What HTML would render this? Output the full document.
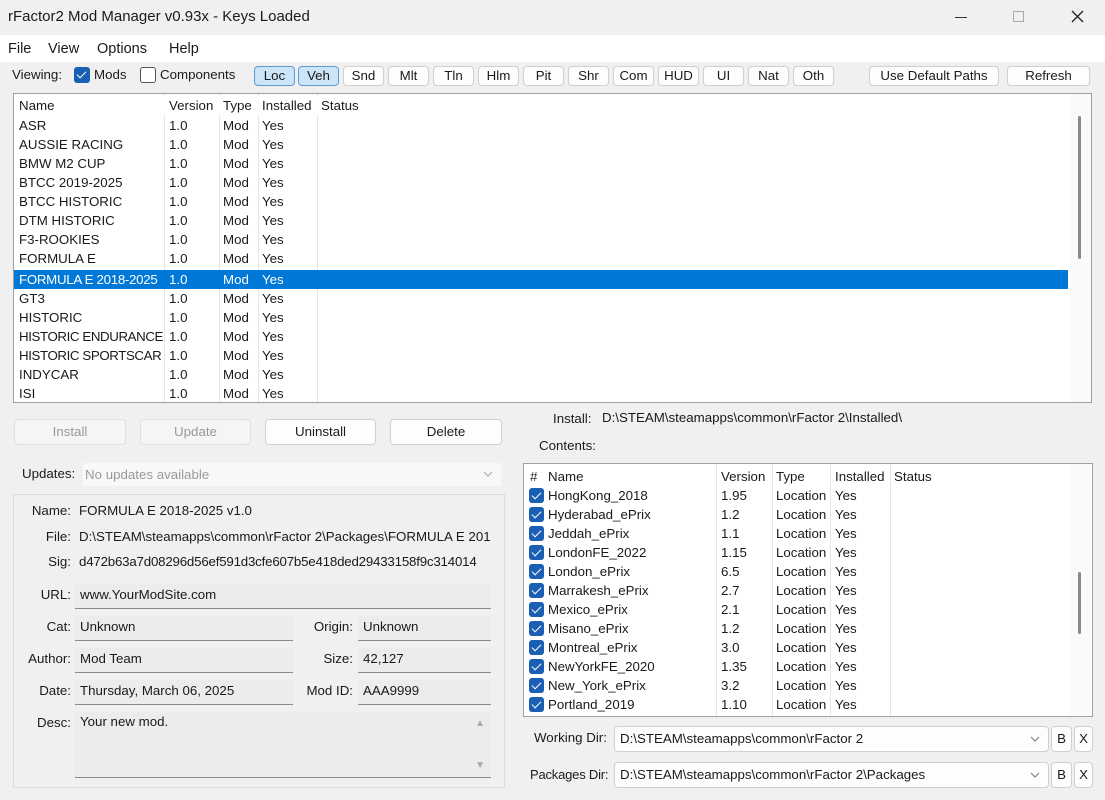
<!DOCTYPE html>
<html><head><meta charset="utf-8"><style>
*{box-sizing:border-box;margin:0;padding:0}
body{width:1105px;height:800px;background:#f0f0f0;font-family:"Liberation Sans",sans-serif;font-size:13.3px;color:#1a1a1a;position:relative;overflow:hidden}
.a{position:absolute;white-space:nowrap}
.btn{position:absolute;background:#fdfdfd;border:1px solid #d0d0d0;border-radius:4px;text-align:center;line-height:18px}
.tb{top:66px;width:41px;height:20px}
.on{background:#cce4f7;border-color:#5a9bd5}
.list{position:absolute;background:#fff;border:1px solid #a0a0a0;overflow:hidden}
.row{position:absolute;left:0;height:19px;line-height:19px;width:100%}
.row span{position:absolute}
.vl{position:absolute;width:1px;background:#e5e5e5}
.cb{position:absolute;width:15px;height:15px;background:#1a5fb4;border-radius:3px}
.cb::after{content:"";position:absolute;left:5px;top:2px;width:4px;height:8px;border:solid #fff;border-width:0 1.5px 1.5px 0;transform:rotate(45deg)}
.fld{position:absolute;background:#ececec;border-bottom:1px solid #8a8a8a;padding-left:5px;line-height:22px;height:25px}
.lbl{position:absolute;text-align:right;width:60px}
.gb{position:absolute;background:#fdfdfd;border:1px solid #d0d0d0;border-radius:4px;line-height:24px;padding-left:5px}
.chev{position:absolute;right:8px;top:9px}
</style></head><body>
<div class="a" style="left:0;top:0;width:1105px;height:35px;background:#eff1ee"></div>
<div class="a" style="left:8px;top:8px;font-size:15px">rFactor2 Mod Manager v0.93x - Keys Loaded</div>
<div class="a" style="left:955px;top:17px;width:12px;height:1px;background:#333"></div>
<div class="a" style="left:1013px;top:11px;width:11px;height:11px;border:1px solid #aaa"></div>
<svg class="a" style="left:1071px;top:10px" width="13" height="13"><path d="M1 1L12 12M12 1L1 12" stroke="#222" stroke-width="1.3"/></svg>
<div class="a" style="left:0;top:35px;width:1105px;height:27px;background:#fff"></div>
<div class="a" style="left:8px;top:41px;font-size:14.5px">File</div>
<div class="a" style="left:48px;top:41px;font-size:14.5px">View</div>
<div class="a" style="left:97px;top:41px;font-size:14.5px">Options</div>
<div class="a" style="left:169px;top:41px;font-size:14.5px">Help</div>

<div class="a" style="left:12px;top:67px">Viewing:</div>
<div class="cb" style="left:74px;top:67px;width:16px;height:16px"></div>
<div class="a" style="left:94px;top:67px">Mods</div>
<div class="a" style="left:140px;top:67px;width:16px;height:16px;border:1px solid #555;border-radius:3px;background:#fff"></div>
<div class="a" style="left:160px;top:67px">Components</div>
<div class="btn tb on" style="left:254px">Loc</div>
<div class="btn tb on" style="left:298px">Veh</div>
<div class="btn tb" style="left:343px">Snd</div>
<div class="btn tb" style="left:388px">Mlt</div>
<div class="btn tb" style="left:433px">Tln</div>
<div class="btn tb" style="left:478px">Hlm</div>
<div class="btn tb" style="left:523px">Pit</div>
<div class="btn tb" style="left:568px">Shr</div>
<div class="btn tb" style="left:613px">Com</div>
<div class="btn tb" style="left:658px">HUD</div>
<div class="btn tb" style="left:703px">UI</div>
<div class="btn tb" style="left:748px">Nat</div>
<div class="btn tb" style="left:793px">Oth</div>
<div class="btn" style="left:869px;top:66px;width:130px;height:20px">Use Default Paths</div>
<div class="btn" style="left:1007px;top:66px;width:83px;height:20px">Refresh</div>

<div class="list" style="left:13px;top:93px;width:1079px;height:310px">
<div class="vl" style="left:150px;top:0;height:310px"></div><div class="vl" style="left:205px;top:0;height:310px"></div><div class="vl" style="left:244px;top:0;height:310px"></div><div class="vl" style="left:303px;top:0;height:310px"></div>
<div class="row" style="top:2px;background:#fff"><span style="left:5px">Name</span><span style="left:155px">Version</span><span style="left:209px">Type</span><span style="left:248px">Installed</span><span style="left:307px">Status</span></div>
<div class="row" style="top:22px"><span style="left:5px">ASR</span><span style="left:155px">1.0</span><span style="left:209px">Mod</span><span style="left:248px">Yes</span></div>
<div class="row" style="top:41px"><span style="left:5px">AUSSIE RACING</span><span style="left:155px">1.0</span><span style="left:209px">Mod</span><span style="left:248px">Yes</span></div>
<div class="row" style="top:60px"><span style="left:5px">BMW M2 CUP</span><span style="left:155px">1.0</span><span style="left:209px">Mod</span><span style="left:248px">Yes</span></div>
<div class="row" style="top:79px"><span style="left:5px">BTCC 2019-2025</span><span style="left:155px">1.0</span><span style="left:209px">Mod</span><span style="left:248px">Yes</span></div>
<div class="row" style="top:98px"><span style="left:5px">BTCC HISTORIC</span><span style="left:155px">1.0</span><span style="left:209px">Mod</span><span style="left:248px">Yes</span></div>
<div class="row" style="top:117px"><span style="left:5px">DTM HISTORIC</span><span style="left:155px">1.0</span><span style="left:209px">Mod</span><span style="left:248px">Yes</span></div>
<div class="row" style="top:136px"><span style="left:5px">F3-ROOKIES</span><span style="left:155px">1.0</span><span style="left:209px">Mod</span><span style="left:248px">Yes</span></div>
<div class="row" style="top:155px"><span style="left:5px">FORMULA E</span><span style="left:155px">1.0</span><span style="left:209px">Mod</span><span style="left:248px">Yes</span></div>
<div class="row" style="top:176px;width:1054px;background:#0078d7;color:#fff"><span style="left:5px;letter-spacing:-0.3px">FORMULA E 2018-2025</span><span style="left:155px">1.0</span><span style="left:209px">Mod</span><span style="left:248px">Yes</span></div>
<div class="row" style="top:195px"><span style="left:5px">GT3</span><span style="left:155px">1.0</span><span style="left:209px">Mod</span><span style="left:248px">Yes</span></div>
<div class="row" style="top:214px"><span style="left:5px">HISTORIC</span><span style="left:155px">1.0</span><span style="left:209px">Mod</span><span style="left:248px">Yes</span></div>
<div class="row" style="top:233px"><span style="left:5px;letter-spacing:-0.4px">HISTORIC ENDURANCE</span><span style="left:155px">1.0</span><span style="left:209px">Mod</span><span style="left:248px">Yes</span></div>
<div class="row" style="top:252px"><span style="left:5px;letter-spacing:-0.4px">HISTORIC SPORTSCAR</span><span style="left:155px">1.0</span><span style="left:209px">Mod</span><span style="left:248px">Yes</span></div>
<div class="row" style="top:271px"><span style="left:5px">INDYCAR</span><span style="left:155px">1.0</span><span style="left:209px">Mod</span><span style="left:248px">Yes</span></div>
<div class="row" style="top:290px"><span style="left:5px">ISI</span><span style="left:155px">1.0</span><span style="left:209px">Mod</span><span style="left:248px">Yes</span></div>
<div class="a" style="left:1056px;top:0;width:22px;height:310px;background:#fafafa"></div>
<div class="a" style="left:1064px;top:22px;width:3px;height:143px;background:#8a8a8a;border-radius:2px"></div>
</div>

<div class="btn" style="left:14px;top:419px;width:112px;height:26px;line-height:24px;color:#999;background:#f5f5f5;border-color:#e0e0e0">Install</div>
<div class="btn" style="left:140px;top:419px;width:111px;height:26px;line-height:24px;color:#999;background:#f5f5f5;border-color:#e0e0e0">Update</div>
<div class="btn" style="left:265px;top:419px;width:111px;height:26px;line-height:24px">Uninstall</div>
<div class="btn" style="left:390px;top:419px;width:112px;height:26px;line-height:24px">Delete</div>

<div class="a" style="left:22px;top:466px">Updates:</div>
<div class="a" style="left:83px;top:463px;width:418px;height:23px;background:#f8f8f8;color:#999;line-height:23px;padding-left:2px">No updates available<svg class="chev" style="top:8px" width="10" height="6"><path d="M1 1L5 5L9 1" stroke="#aaa" fill="none"/></svg></div>

<div class="a" style="left:13px;top:494px;width:492px;height:294px;border:1px solid #dcdcdc"></div>
<div class="lbl" style="left:11px;top:503px">Name:</div><div class="a" style="left:79px;top:503px">FORMULA E 2018-2025 v1.0</div>
<div class="lbl" style="left:11px;top:529px">File:</div><div class="a" style="left:79px;top:529px;width:412px;overflow:hidden">D:\STEAM\steamapps\common\rFactor 2\Packages\FORMULA E 2018-2025.rfcmp</div>
<div class="lbl" style="left:11px;top:554px">Sig:</div><div class="a" style="left:79px;top:554px;width:412px;overflow:hidden;letter-spacing:-0.2px">d472b63a7d08296d56ef591d3cfe607b5e418ded29433158f9c314014</div>
<div class="lbl" style="left:11px;top:587px">URL:</div><div class="fld" style="left:75px;top:584px;width:416px">www.YourModSite.com</div>
<div class="lbl" style="left:11px;top:619px">Cat:</div><div class="fld" style="left:75px;top:616px;width:218px">Unknown</div>
<div class="lbl" style="left:11px;top:651px">Author:</div><div class="fld" style="left:75px;top:648px;width:218px">Mod Team</div>
<div class="lbl" style="left:11px;top:683px">Date:</div><div class="fld" style="left:75px;top:680px;width:218px">Thursday, March 06, 2025</div>
<div class="lbl" style="left:293px;top:619px">Origin:</div><div class="fld" style="left:358px;top:616px;width:133px">Unknown</div>
<div class="lbl" style="left:293px;top:651px">Size:</div><div class="fld" style="left:358px;top:648px;width:133px">42,127</div>
<div class="lbl" style="left:293px;top:683px">Mod ID:</div><div class="fld" style="left:358px;top:680px;width:133px">AAA9999</div>
<div class="lbl" style="left:11px;top:715px">Desc:</div><div class="fld" style="left:75px;top:712px;width:416px;height:66px;line-height:20px">Your new mod.<span style="position:absolute;right:6px;top:2px;color:#aaa;font-size:10px">▲</span><span style="position:absolute;right:6px;top:44px;color:#aaa;font-size:10px">▼</span></div>

<div class="a" style="left:553px;top:411px">Install:</div>
<div class="a" style="left:602px;top:410px">D:\STEAM\steamapps\common\rFactor 2\Installed\</div>
<div class="a" style="left:539px;top:438px">Contents:</div>

<div class="list" style="left:523px;top:463px;width:570px;height:254px">
<div class="vl" style="left:192px;top:0;height:254px"></div><div class="vl" style="left:248px;top:0;height:254px"></div><div class="vl" style="left:306px;top:0;height:254px"></div><div class="vl" style="left:366px;top:0;height:254px"></div>
<div class="row" style="top:3px"><span style="left:6px">#</span><span style="left:24px">Name</span><span style="left:197px">Version</span><span style="left:252px">Type</span><span style="left:311px">Installed</span><span style="left:370px">Status</span></div>
<div class="row" style="top:22px"><span class="cb" style="left:5px;top:2px"></span><span style="left:24px">HongKong_2018</span><span style="left:197px">1.95</span><span style="left:252px">Location</span><span style="left:311px">Yes</span></div>
<div class="row" style="top:41px"><span class="cb" style="left:5px;top:2px"></span><span style="left:24px">Hyderabad_ePrix</span><span style="left:197px">1.2</span><span style="left:252px">Location</span><span style="left:311px">Yes</span></div>
<div class="row" style="top:60px"><span class="cb" style="left:5px;top:2px"></span><span style="left:24px">Jeddah_ePrix</span><span style="left:197px">1.1</span><span style="left:252px">Location</span><span style="left:311px">Yes</span></div>
<div class="row" style="top:79px"><span class="cb" style="left:5px;top:2px"></span><span style="left:24px">LondonFE_2022</span><span style="left:197px">1.15</span><span style="left:252px">Location</span><span style="left:311px">Yes</span></div>
<div class="row" style="top:98px"><span class="cb" style="left:5px;top:2px"></span><span style="left:24px">London_ePrix</span><span style="left:197px">6.5</span><span style="left:252px">Location</span><span style="left:311px">Yes</span></div>
<div class="row" style="top:117px"><span class="cb" style="left:5px;top:2px"></span><span style="left:24px">Marrakesh_ePrix</span><span style="left:197px">2.7</span><span style="left:252px">Location</span><span style="left:311px">Yes</span></div>
<div class="row" style="top:136px"><span class="cb" style="left:5px;top:2px"></span><span style="left:24px">Mexico_ePrix</span><span style="left:197px">2.1</span><span style="left:252px">Location</span><span style="left:311px">Yes</span></div>
<div class="row" style="top:155px"><span class="cb" style="left:5px;top:2px"></span><span style="left:24px">Misano_ePrix</span><span style="left:197px">1.2</span><span style="left:252px">Location</span><span style="left:311px">Yes</span></div>
<div class="row" style="top:174px"><span class="cb" style="left:5px;top:2px"></span><span style="left:24px">Montreal_ePrix</span><span style="left:197px">3.0</span><span style="left:252px">Location</span><span style="left:311px">Yes</span></div>
<div class="row" style="top:193px"><span class="cb" style="left:5px;top:2px"></span><span style="left:24px">NewYorkFE_2020</span><span style="left:197px">1.35</span><span style="left:252px">Location</span><span style="left:311px">Yes</span></div>
<div class="row" style="top:212px"><span class="cb" style="left:5px;top:2px"></span><span style="left:24px">New_York_ePrix</span><span style="left:197px">3.2</span><span style="left:252px">Location</span><span style="left:311px">Yes</span></div>
<div class="row" style="top:231px"><span class="cb" style="left:5px;top:2px"></span><span style="left:24px">Portland_2019</span><span style="left:197px">1.10</span><span style="left:252px">Location</span><span style="left:311px">Yes</span></div>
<div class="a" style="left:546px;top:0;width:22px;height:254px;background:#fafafa"></div>
<div class="a" style="left:554px;top:108px;width:3px;height:62px;background:#8a8a8a;border-radius:2px"></div>
</div>

<div class="a" style="left:534px;top:730px">Working Dir:</div>
<div class="gb" style="left:614px;top:726px;width:435px;height:26px">D:\STEAM\steamapps\common\rFactor 2<svg class="chev" width="10" height="6"><path d="M1 1L5 5L9 1" stroke="#777" fill="none"/></svg></div>
<div class="btn" style="left:1051px;top:726px;width:21px;height:26px;line-height:24px">B</div>
<div class="btn" style="left:1074px;top:726px;width:19px;height:26px;line-height:24px">X</div>
<div class="a" style="left:530px;top:767px;font-size:13px;letter-spacing:-0.2px">Packages Dir:</div>
<div class="gb" style="left:614px;top:762px;width:435px;height:26px">D:\STEAM\steamapps\common\rFactor 2\Packages<svg class="chev" width="10" height="6"><path d="M1 1L5 5L9 1" stroke="#777" fill="none"/></svg></div>
<div class="btn" style="left:1051px;top:762px;width:21px;height:26px;line-height:24px">B</div>
<div class="btn" style="left:1074px;top:762px;width:19px;height:26px;line-height:24px">X</div>
</body></html>
